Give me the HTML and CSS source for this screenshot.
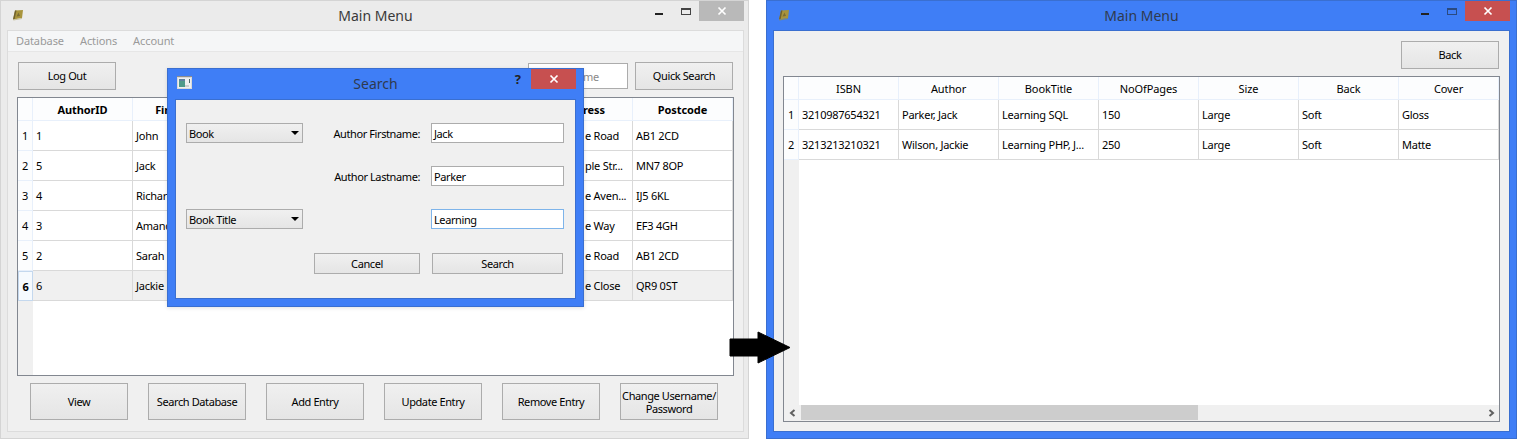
FILE: index.html
```html
<!DOCTYPE html>
<html lang="en">
<head>
<meta charset="utf-8">
<title>Main Menu</title>
<link rel="stylesheet" href="styles.css">
</head>
<body>
<div class="desktop">

  <section class="window window-left">
    <header class="titlebar">
      <svg class="app-icon" viewBox="0 0 12 12"><path d="M3 1.5 11 1 10 9 1 10.5Z" fill="#a8943c"/><path d="M1 10.5 3 1.5 4.5 1.4 2.6 10.2Z" fill="#6e6030"/><path d="M4.5 7.5 6.5 3.5 8 7Z" fill="#7a6c34"/><path d="M1 10.5 10 9 10 10 1.5 11.5Z" fill="#c9c2a0"/></svg>
      <span class="title">Main Menu</span>
      <div class="controls">
        <span class="ctl-min"></span><span class="ctl-max"></span>
        <span class="ctl-close ctl-close-idle"><svg viewBox="0 0 10 10"><path d="M1.5 1.5 8.5 8.5M8.5 1.5 1.5 8.5" stroke="#fff" stroke-width="1.7"/></svg></span>
      </div>
    </header>
    <div class="client">
      <nav class="menubar"><span>Database</span><span>Actions</span><span>Account</span></nav>
      <div class="main-pane">
        <div class="toolbar">
          <button class="btn btn-top">Log Out</button>
          <div class="spacer"></div>
          <div class="quick-input">me</div>
          <button class="btn btn-top">Quick Search</button>
        </div>
        <div class="table table-left">
          <div class="corner"></div>
          <div class="hcell bold">AuthorID</div><div class="hcell bold">Firstname</div><div class="hcell"></div><div class="hcell"></div><div class="hcell"></div><div class="hcell bold cut-head">ress</div><div class="hcell bold">Postcode</div>

          <div class="rowhead">1</div>
          <div class="cell">1</div><div class="cell">John</div><div class="cell"></div><div class="cell"></div><div class="cell"></div><div class="cell cut">e Road</div><div class="cell">AB1 2CD</div>

          <div class="rowhead">2</div>
          <div class="cell">5</div><div class="cell">Jack</div><div class="cell"></div><div class="cell"></div><div class="cell"></div><div class="cell cut">ple Str...</div><div class="cell">MN7 8OP</div>

          <div class="rowhead">3</div>
          <div class="cell">4</div><div class="cell">Richard</div><div class="cell"></div><div class="cell"></div><div class="cell"></div><div class="cell cut">e Aven...</div><div class="cell">IJ5 6KL</div>

          <div class="rowhead">4</div>
          <div class="cell">3</div><div class="cell">Amanda</div><div class="cell"></div><div class="cell"></div><div class="cell"></div><div class="cell cut">e Way</div><div class="cell">EF3 4GH</div>

          <div class="rowhead">5</div>
          <div class="cell">2</div><div class="cell">Sarah</div><div class="cell"></div><div class="cell"></div><div class="cell"></div><div class="cell cut">e Road</div><div class="cell">AB1 2CD</div>

          <div class="rowhead rowhead-current">6</div>
          <div class="cell sel">6</div><div class="cell sel">Jackie</div><div class="cell sel"></div><div class="cell sel"></div><div class="cell sel"></div><div class="cell sel cut">e Close</div><div class="cell sel">QR9 0ST</div>
          <div class="rowfill"></div>
        </div>
        <div class="actions">
          <button class="btn btn-act">View</button>
          <button class="btn btn-act">Search Database</button>
          <button class="btn btn-act">Add Entry</button>
          <button class="btn btn-act">Update Entry</button>
          <button class="btn btn-act">Remove Entry</button>
          <button class="btn btn-act">Change Username/<br>Password</button>
        </div>
      </div>
    </div>
  </section>

  <section class="dialog">
    <header class="dialog-bar">
      <svg class="dlg-icon" viewBox="0 0 15 13"><rect width="15" height="13" fill="#d8d8d8"/><rect y="0" width="15" height="1" fill="#8d8d8d"/><rect x="1" y="2" width="13" height="10" fill="#eef0f0"/><rect x="2" y="3" width="6" height="8" fill="#4f9a8a"/><rect x="2" y="3" width="6" height="2" fill="#5d7f9e"/><rect x="12" y="3" width="1" height="4" fill="#4e6a68"/><rect x="8" y="9" width="4" height="2" fill="#cfcfcf"/></svg>
      <span class="dlg-title">Search</span>
      <span class="dlg-help">?</span>
      <span class="ctl-close ctl-close-dlg"><svg viewBox="0 0 10 10"><path d="M1.5 1.5 8.5 8.5M8.5 1.5 1.5 8.5" stroke="#fff" stroke-width="1.7"/></svg></span>
    </header>
    <div class="dialog-client">
      <div class="combo">Book<i class="caret"></i></div>
      <label class="lbl">Author Firstname:</label>
      <div class="field">Jack</div>

      <label class="lbl lbl-r2">Author Lastname:</label>
      <div class="field field-r2">Parker</div>

      <div class="combo combo-r3">Book Title<i class="caret"></i></div>
      <div class="field field-r3 focus">Learning</div>

      <button class="btn btn-dlg btn-cancel">Cancel</button>
      <button class="btn btn-dlg btn-search">Search</button>
    </div>
  </section>

  <svg class="flow-arrow" viewBox="0 0 62 33"><path d="M1 8H29V1L61 16.5 29 32V25H1Z" fill="#000" stroke="#000" stroke-width="1" stroke-linejoin="round"/></svg>

  <section class="window window-right">
    <header class="titlebar">
      <svg class="app-icon" viewBox="0 0 12 12"><path d="M3 1.5 11 1 10 9 1 10.5Z" fill="#a8943c"/><path d="M1 10.5 3 1.5 4.5 1.4 2.6 10.2Z" fill="#6e6030"/><path d="M4.5 7.5 6.5 3.5 8 7Z" fill="#7a6c34"/><path d="M1 10.5 10 9 10 10 1.5 11.5Z" fill="#7f8a70"/></svg>
      <span class="title">Main Menu</span>
      <div class="controls">
        <span class="ctl-min"></span><span class="ctl-max"></span>
        <span class="ctl-close"><svg viewBox="0 0 10 10"><path d="M1.5 1.5 8.5 8.5M8.5 1.5 1.5 8.5" stroke="#fff" stroke-width="1.7"/></svg></span>
      </div>
    </header>
    <div class="client client-right">
      <div class="toolbar-right"><button class="btn btn-top">Back</button></div>
      <div class="table table-right">
        <div class="corner"></div>
        <div class="hcell">ISBN</div><div class="hcell">Author</div><div class="hcell">BookTitle</div><div class="hcell">NoOfPages</div><div class="hcell">Size</div><div class="hcell">Back</div><div class="hcell">Cover</div>

        <div class="rowhead">1</div>
        <div class="cell">3210987654321</div><div class="cell">Parker, Jack</div><div class="cell">Learning SQL</div><div class="cell">150</div><div class="cell">Large</div><div class="cell">Soft</div><div class="cell">Gloss</div>

        <div class="rowhead">2</div>
        <div class="cell">3213213210321</div><div class="cell">Wilson, Jackie</div><div class="cell">Learning PHP, J...</div><div class="cell">250</div><div class="cell">Large</div><div class="cell">Soft</div><div class="cell">Matte</div>
        <div class="rowfill"></div>
        <div class="scrollbar">
          <svg class="sb-arrow" viewBox="0 0 7 8"><path d="M5.5 1 2 4 5.5 7" fill="none" stroke="#606060" stroke-width="2"/></svg>
          <div class="sb-track"><div class="sb-thumb"></div></div>
          <svg class="sb-arrow" viewBox="0 0 7 8"><path d="M1.5 1 5 4 1.5 7" fill="none" stroke="#606060" stroke-width="2"/></svg>
        </div>
      </div>
    </div>
  </section>
</div>
</body>
</html>
```

FILE: styles.css
```css
* { box-sizing: border-box; }

html, body {
  margin: 0;
  padding: 0;
  background: #fff;
  height: 440px;
  overflow: hidden;
}

body {
  font-family: "Noto Sans", "Open Sans", sans-serif;
  font-size: 11px;
  letter-spacing: -0.4px;
  color: #000;
}

.desktop {
  position: relative;
  width: 1518px;
  height: 440px;
}

/* windows on the desktop */
.window {
  position: absolute;
  top: 0;
  display: flex;
  flex-direction: column;
}

.window-left {
  left: 0;
  width: 749px;
  height: 439px;
  background: #ebebeb;
  border: 1px solid #d4d4d4;
  padding: 0 4px 6px 6px;
}

.window-right {
  left: 766px;
  width: 751px;
  height: 439px;
  background: #3f7ef6;
  border: 1px solid #3a6fd0;
  padding: 0 6px 6px 6px;
}

.titlebar {
  position: relative;
  height: 29px;
  flex: none;
  display: flex;
  align-items: center;
  justify-content: center;
}

.title {
  font-size: 14px;
  letter-spacing: 0;
  color: #3a3a3a;
}

.window-right .title { color: #2f3a4e; }

.app-icon {
  position: absolute;
  left: 5px;
  top: 8px;
  width: 12px;
  height: 12px;
}

.controls {
  position: absolute;
  top: 0;
  right: 0;
  display: flex;
  align-items: flex-start;
  height: 20px;
}

.ctl-min {
  width: 8px;
  height: 2px;
  margin-top: 12px;
  margin-right: 18px;
  background: #222;
}

.ctl-max {
  width: 10px;
  height: 7px;
  margin-top: 7px;
  margin-right: 8px;
  border: 1px solid #444;
  border-top-width: 2px;
}

.window-right .ctl-max { border-color: #2b4a80; }

.ctl-close {
  width: 45px;
  height: 20px;
  background: #c75050;
  display: flex;
  align-items: center;
  justify-content: center;
}

.ctl-close svg { width: 10px; height: 10px; }

.ctl-close-idle { background: #b9b9b9; }

.client {
  flex: 1;
  min-height: 0;
  display: flex;
  flex-direction: column;
  background: #f0f0f0;
  border: 1px solid #dcdcdc;
}

.client-right {
  border-color: #3a6fd0;
  padding: 10px 9px 8px 9px;
}

.menubar {
  height: 21px;
  flex: none;
  display: flex;
  gap: 16px;
  align-items: center;
  padding: 0 0 1px 8px;
  background: #f5f6f7;
  border-bottom: 1px solid #e6e6e6;
  color: #9a9a9a;
  letter-spacing: -0.1px;
}

.main-pane {
  flex: 1;
  display: flex;
  flex-direction: column;
  padding: 10px 9px 11px 9px;
}

.toolbar {
  display: flex;
  align-items: center;
  height: 28px;
  margin: 0 1px;
  flex: none;
}

.spacer { flex: 1; }

.btn {
  font: inherit;
  letter-spacing: inherit;
  color: #000;
  border: 1px solid #acacac;
  background: linear-gradient(#f0f0f0, #e5e5e5);
  padding: 0;
  border-radius: 0;
}

.btn-top {
  width: 98px;
  height: 28px;
  padding-bottom: 2px;
}

.quick-input {
  width: 100px;
  height: 26px;
  margin-right: 7px;
  background: #fff;
  border: 1px solid #acacac;
  color: #8a8a8a;
  padding-left: 54px;
  display: flex;
  align-items: center;
}

.table {
  display: grid;
  background: #fff;
  border: 1px solid #828790;
}

.table-left {
  margin-top: 7px;
  height: 279px;
  flex: none;
  grid-template-columns: 15px repeat(7, 100px);
  grid-template-rows: 23px repeat(6, 30px) 1fr;
}

.table-right {
  margin-top: 7px;
  height: 346px;
  grid-template-columns: 15px repeat(7, 100px);
  grid-template-rows: 23px 30px 30px 1fr 16px;
}

.corner,
.hcell {
  background: #fcfdfe;
  border-right: 1px solid #e8f0fb;
  border-bottom: 1px solid #e8f0fb;
}

.hcell {
  display: flex;
  align-items: center;
  justify-content: center;
  letter-spacing: -0.1px;
}

.bold { font-weight: 700; }

.cut-head {
  justify-content: flex-start;
  padding-left: 50px;
}

.rowhead {
  background: #fcfdfe;
  border-right: 1px solid #e8f0fb;
  border-bottom: 1px solid #e8f0fb;
  display: flex;
  align-items: center;
  justify-content: center;
}

.rowhead-current {
  font-weight: 700;
  border: 1px solid #c4d8ee;
  background: #f6fafe;
}

.cell {
  display: flex;
  align-items: center;
  padding-left: 3px;
  border-right: 1px solid #d9d9d9;
  border-bottom: 1px solid #d9d9d9;
  white-space: nowrap;
  overflow: hidden;
  letter-spacing: -0.25px;
}

.cut { padding-left: 52px; }

.sel { background: #f0f0f0; }

.rowfill {
  grid-column: 1 / 2;
  background: #f0f0f0;
}

.scrollbar {
  grid-column: 1 / -1;
  display: flex;
  align-items: center;
  background: #f0f0f0;
  height: 16px;
  padding-bottom: 1px;
}

.sb-arrow {
  flex: none;
  width: 7px;
  height: 8px;
  margin: 0 4px 0 5px;
}

.sb-track {
  flex: 1;
  height: 15px;
}

.sb-thumb {
  width: 397px;
  height: 100%;
  margin-left: 1px;
  background: #cdcdcd;
}

.actions {
  display: flex;
  gap: 20px;
  margin-top: 7px;
  padding-left: 13px;
  flex: none;
}

.btn-act {
  width: 98px;
  height: 37px;
  line-height: 13px;
  white-space: nowrap;
}

.toolbar-right {
  display: flex;
  justify-content: flex-end;
  flex: none;
  height: 28px;
  margin-right: 1px;
}

/* dialog over the left window */
.dialog {
  position: absolute;
  left: 167px;
  top: 68px;
  width: 417px;
  height: 239px;
  background: #3f7ef6;
  border: 1px solid #3a6fd0;
  padding: 0 7px 7px 7px;
  display: flex;
  flex-direction: column;
  box-shadow: 0 1px 4px rgba(0, 0, 0, .12);
}

.dialog-bar {
  position: relative;
  height: 30px;
  flex: none;
  display: flex;
  align-items: center;
  justify-content: center;
}

.dlg-title {
  font-size: 14px;
  letter-spacing: 0;
  color: #2f3a4e;
  margin-bottom: 2px;
}

.dlg-icon {
  position: absolute;
  left: 2px;
  top: 7px;
  width: 15px;
  height: 13px;
}

.dlg-help {
  position: absolute;
  right: 55px;
  top: 1px;
  font-size: 13px;
  font-weight: 700;
  letter-spacing: 0;
  color: #222;
  line-height: 18px;
}

.ctl-close-dlg {
  position: absolute;
  right: 0;
  top: 0;
}

.dialog-client {
  flex: 1;
  background: #f0f0f0;
  border: 1px solid #3a6fd0;
  display: grid;
  grid-template-columns: 10px 117px 11px 106px 11px 133px;
  grid-template-rows: 23px 20px 23px 20px 23px 20px 24px 21px;
}

.combo {
  grid-column: 2;
  grid-row: 2;
  border: 1px solid #acacac;
  background: linear-gradient(#f0f0f0, #e5e5e5);
  padding-left: 2px;
  display: flex;
  align-items: center;
  justify-content: space-between;
}

.combo-r3 { grid-row: 6; }

.caret {
  width: 0;
  height: 0;
  margin-right: 3px;
  border-left: 4px solid transparent;
  border-right: 4px solid transparent;
  border-top: 4px solid #000;
}

.lbl {
  grid-column: 3 / 5;
  grid-row: 2;
  display: flex;
  align-items: center;
  justify-content: flex-end;
  white-space: nowrap;
}

.lbl-r2 { grid-row: 4; }

.field {
  grid-column: 6;
  grid-row: 2;
  background: #fff;
  border: 1px solid #acacac;
  padding-left: 2px;
  display: flex;
  align-items: center;
}

.field-r2 { grid-row: 4; }
.field-r3 { grid-row: 6; }
.focus { border-color: #7eb4ea; }

.btn-dlg { grid-row: 8; }

.btn-cancel {
  grid-column: 3 / 5;
  width: 106px;
  justify-self: end;
}

.btn-search {
  grid-column: 6;
  width: 131px;
  margin-left: 1px;
}

.flow-arrow {
  position: absolute;
  left: 729px;
  top: 331px;
  width: 62px;
  height: 33px;
  z-index: 5;
}
```
